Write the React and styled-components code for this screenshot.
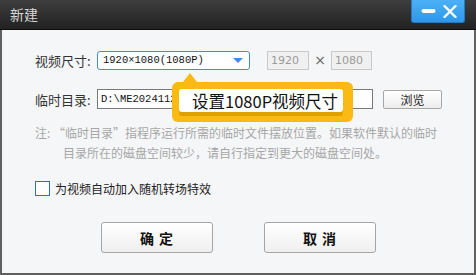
import React from 'react'
import styled, { createGlobalStyle } from 'styled-components'

const GlobalStyle = createGlobalStyle`
  html, body {
    margin: 0;
    padding: 0;
    background: #f5f6f8;
  }
  body {
    font-family: "Noto Sans CJK SC", "Noto Sans", sans-serif;
  }
`

const Window = styled.div`
  width: 476px;
  height: 275px;
  display: flex;
  flex-direction: column;
  box-sizing: border-box;
  overflow: hidden;
`

const TitleBar = styled.div`
  height: 29px;
  flex: none;
  display: flex;
  justify-content: space-between;
  align-items: flex-start;
  background: linear-gradient(#3e3e3e, #222222);
  border-bottom: 1px solid #0d0d0d;
`

const Title = styled.div`
  padding-left: 10px;
  line-height: 29px;
  font-size: 14px;
  color: #d6d6d6;
`

const Controls = styled.div`
  margin-right: 11px;
  width: 54px;
  height: 23px;
  box-sizing: border-box;
  display: flex;
  align-items: center;
  justify-content: space-around;
  padding: 0 4px 0 5px;
  background: linear-gradient(#4cb0f7, #2e97ec);
  border: 1px solid #2479c0;
  border-top: none;
  border-radius: 0 0 3px 3px;
`

const Body = styled.div`
  flex: 1;
  position: relative;
  background: #f5f6f8;
  border: 2px solid #606060;
  border-top: none;
  padding: 20px 0 0 33px;
  display: flex;
  flex-direction: column;
`

const Row = styled.div`
  display: flex;
  align-items: center;
  height: 20px;
  margin-bottom: ${p => p.$mb || 0}px;
`

const Label = styled.div`
  width: 62px;
  font-size: 13px;
  color: #333;
  white-space: nowrap;
`

const Select = styled.div`
  width: 153px;
  height: 19px;
  box-sizing: border-box;
  border: 1px solid #3d8ddb;
  border-radius: 3px;
  background: #fff;
  display: flex;
  align-items: center;
  justify-content: space-between;
  padding: 0 6px 0 5px;
`

const MonoText = styled.span`
  font-family: "Liberation Mono", "Noto Sans CJK SC", monospace;
  font-size: 10.5px;
  color: #111;
  white-space: nowrap;
`

const Arrow = styled.span`
  width: 0;
  height: 0;
  border-left: 5px solid transparent;
  border-right: 5px solid transparent;
  border-top: 5px solid #3a8fe3;
`

const SizeBox = styled.div`
  width: ${p => p.$w}px;
  height: 19px;
  box-sizing: border-box;
  border: 1px solid #c9c9c9;
  background: #f0f0f0;
  color: #9a9a9a;
  font-size: 11px;
  font-family: "DejaVu Sans", sans-serif;
  display: flex;
  align-items: center;
  padding-left: 3px;
  margin-left: ${p => p.$ml || 0}px;
`

const Times = styled.div`
  width: 22px;
  text-align: center;
  color: #666;
  font-size: 14px;
  font-family: "DejaVu Sans", sans-serif;
`

const PathInput = styled.div`
  width: 276px;
  height: 20px;
  box-sizing: border-box;
  border: 1px solid #7a7a7a;
  background: #fff;
  display: flex;
  align-items: center;
  padding-left: 3px;
`

const SmallButton = styled.div`
  width: 59px;
  height: 19px;
  box-sizing: border-box;
  margin-left: 10px;
  border: 1px solid #a8a8a8;
  border-radius: 2px;
  background: linear-gradient(#ffffff, #ececec);
  font-size: 12px;
  color: #222;
  display: flex;
  align-items: center;
  justify-content: center;
`

const Note = styled.p`
  margin: 14px 0 0;
  width: 384px;
  padding-left: 28px;
  text-indent: -28px;
  font-size: 12px;
  line-height: 20px;
  color: #a6a6a6;
`

const NoteLabel = styled.span`
  display: inline-block;
  text-indent: 0;
  width: 18px;
`

const CheckRow = styled.label`
  display: flex;
  align-items: center;
  margin-top: 17px;
  font-size: 12px;
  color: #222;
  gap: 5px;
`

const Check = styled.span`
  width: 15px;
  height: 15px;
  box-sizing: border-box;
  border: 1px solid #2a6fc8;
  background: #fff;
`

const Actions = styled.div`
  display: flex;
  justify-content: center;
  gap: 51px;
  margin-top: 25px;
  margin-left: -33px;
`

const Button = styled.div`
  width: 112px;
  height: 31px;
  box-sizing: border-box;
  border: 1px solid #a5a5a5;
  border-radius: 3px;
  background: linear-gradient(#ffffff, #efefef);
  display: flex;
  align-items: center;
  justify-content: center;
  font-size: 14px;
  font-weight: 700;
  letter-spacing: 5px;
  padding-left: 5px;
  color: #111;
`

const Tip = styled.div`
  position: absolute;
  left: 170px;
  top: 52px;
  width: 181px;
  height: 40px;
  box-sizing: border-box;
  padding: 7px 10px 10px 7px;
  background: #fbb914;
  border-radius: 6px;
  &::before {
    content: '';
    position: absolute;
    left: 11px;
    top: -9px;
    border-left: 7px solid transparent;
    border-right: 7px solid transparent;
    border-bottom: 9px solid #fbb914;
  }
`

const TipInner = styled.div`
  height: 23px;
  background: #fff;
  border-radius: 3px;
  box-shadow: 0 4px 0 #dea100;
  display: flex;
  align-items: center;
  padding-left: 13px;
  font-size: 16.5px;
  color: #111;
  white-space: nowrap;
`

const MinIcon = () => (
  <svg width="15" height="6" viewBox="0 0 15 6">
    <rect x="0.5" y="1" width="14" height="4" rx="2" fill="#fff" />
  </svg>
)

const CloseIcon = () => (
  <svg width="14" height="13" viewBox="0 0 14 13">
    <path d="M1.5 1 L12.5 12 M12.5 1 L1.5 12" stroke="#fff" strokeWidth="2.4" strokeLinecap="round" />
  </svg>
)

export default function App () {
  return (
    <Window>
      <GlobalStyle />
      <TitleBar>
        <Title>新建</Title>
        <Controls>
          <MinIcon />
          <CloseIcon />
        </Controls>
      </TitleBar>
      <Body>
        <Row $mb={19}>
          <Label>视频尺寸:</Label>
          <Select>
            <MonoText>1920×1080(1080P)</MonoText>
            <Arrow />
          </Select>
          <SizeBox $w={42} $ml={17}>1920</SizeBox>
          <Times>×</Times>
          <SizeBox $w={41}>1080</SizeBox>
        </Row>
        <Row>
          <Label>临时目录:</Label>
          <PathInput>
            <MonoText>D:\ME2024112</MonoText>
          </PathInput>
          <SmallButton>浏览</SmallButton>
        </Row>
        <Note>
          <NoteLabel>注:</NoteLabel>“临时目录”指程序运行所需的临时文件摆放位置。如果软件默认的临时目录所在的磁盘空间较少，请自行指定到更大的磁盘空间处。
        </Note>
        <CheckRow>
          <Check />
          为视频自动加入随机转场特效
        </CheckRow>
        <Actions>
          <Button>确定</Button>
          <Button>取消</Button>
        </Actions>
        <Tip>
          <TipInner>设置1080P视频尺寸</TipInner>
        </Tip>
      </Body>
    </Window>
  )
}
